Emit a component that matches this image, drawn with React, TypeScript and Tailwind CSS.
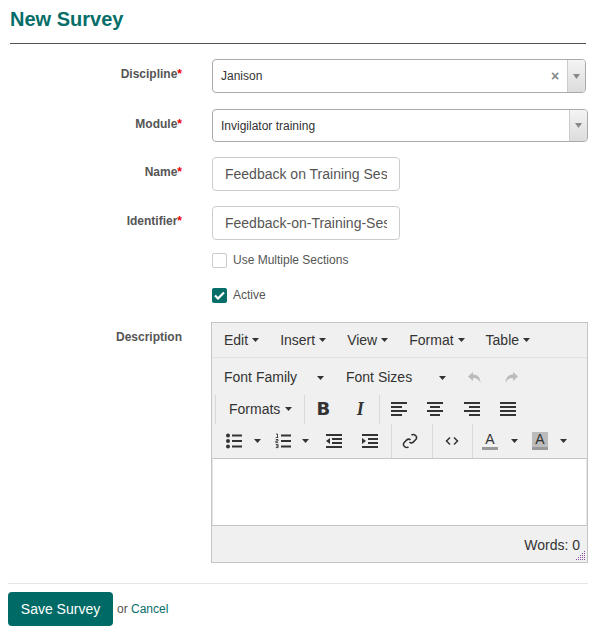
import React from "react";

const Caret = ({ className = "" }: { className?: string }) => (
    <svg width="7" height="4" viewBox="0 0 7 4" className={className}>
        <path d="M0 0h7L3.5 4z" fill="#333" />
    </svg>
);

const Label = ({ text, required }: { text: string; required?: boolean }) => (
    <div className="w-[174px] shrink-0 text-right pt-[8px] text-[12px] leading-[14px] font-bold text-[#555]">
        {text}
        {required && <span className="text-[#e00]">*</span>}
    </div>
);

const Sep = () => <div className="w-px self-stretch bg-[#d9d9d9]" />;

const Lines = ({ rows }: { rows: [number, number][] }) => (
    <svg width="16" height="16" viewBox="0 0 16 16">
        {rows.map(([x, w], i) => (
            <rect key={i} x={x} y={1 + i * 4} width={w} height="2" fill="#333" />
        ))}
    </svg>
);

const AlignLeft = () => <Lines rows={[[0, 16], [0, 11], [0, 16], [0, 11]]} />;
const AlignCenter = () => <Lines rows={[[0, 16], [3, 10], [0, 16], [3, 10]]} />;
const AlignRight = () => <Lines rows={[[0, 16], [5, 11], [0, 16], [5, 11]]} />;
const AlignJustify = () => <Lines rows={[[0, 16], [0, 16], [0, 16], [0, 16]]} />;

const BulletList = () => (
    <svg width="16" height="16" viewBox="0 0 16 16">
        <circle cx="2" cy="2.5" r="2" fill="#333" />
        <circle cx="2" cy="8" r="2" fill="#333" />
        <circle cx="2" cy="13.5" r="2" fill="#333" />
        <rect x="6" y="1.5" width="10" height="2" fill="#333" />
        <rect x="6" y="7" width="10" height="2" fill="#333" />
        <rect x="6" y="12.5" width="10" height="2" fill="#333" />
    </svg>
);

const NumList = () => (
    <svg width="16" height="16" viewBox="0 0 16 16">
        <path d="M1 1h1.5v3.5M0.8 4.5h2.4" stroke="#333" strokeWidth="0.9" fill="none" />
        <path d="M0.8 6.5h2.2v1.5h-2.2v1.6h2.4" stroke="#333" strokeWidth="0.9" fill="none" />
        <path d="M0.8 11.5h2.3v1.5h-2M3.1 13v1.6h-2.3" stroke="#333" strokeWidth="0.9" fill="none" />
        <rect x="6" y="1.5" width="10" height="2" fill="#333" />
        <rect x="6" y="7" width="10" height="2" fill="#333" />
        <rect x="6" y="12.5" width="10" height="2" fill="#333" />
    </svg>
);

const Outdent = () => (
    <svg width="16" height="16" viewBox="0 0 16 16">
        <rect x="0" y="1" width="16" height="2" fill="#333" />
        <rect x="6" y="5" width="10" height="2" fill="#333" />
        <rect x="6" y="9" width="10" height="2" fill="#333" />
        <rect x="0" y="13" width="16" height="2" fill="#333" />
        <path d="M4 5v6L0 8z" fill="#333" />
    </svg>
);

const Indent = () => (
    <svg width="16" height="16" viewBox="0 0 16 16">
        <rect x="0" y="1" width="16" height="2" fill="#333" />
        <rect x="6" y="5" width="10" height="2" fill="#333" />
        <rect x="6" y="9" width="10" height="2" fill="#333" />
        <rect x="0" y="13" width="16" height="2" fill="#333" />
        <path d="M0 5v6l4-3z" fill="#333" />
    </svg>
);

const LinkIcon = () => (
    <svg width="16" height="16" viewBox="0 0 16 16" fill="none" stroke="#333" strokeWidth="1.6">
        <path d="M9.5 2.2a2.6 2.6 0 0 1 3.7 0l0.6 0.6a2.6 2.6 0 0 1 0 3.7l-2.6 2.6a2.6 2.6 0 0 1-3.7 0" />
        <path d="M6.5 13.8a2.6 2.6 0 0 1-3.7 0l-0.6-0.6a2.6 2.6 0 0 1 0-3.7l2.6-2.6a2.6 2.6 0 0 1 3.7 0" />
    </svg>
);

const CodeIcon = () => (
    <svg width="16" height="16" viewBox="0 0 16 16" fill="none" stroke="#333" strokeWidth="1.5">
        <path d="M6 4.5L2.5 8 6 11.5M10 4.5L13.5 8 10 11.5" />
    </svg>
);

const Undo = () => (
    <svg width="16" height="16" viewBox="0 0 16 16">
        <path d="M6 2L1 6.5 6 11V8c4 0 6 1.5 7.5 5 0-5-2.5-8.5-7.5-8.5z" fill="#bbb" />
    </svg>
);

const Redo = () => (
    <svg width="16" height="16" viewBox="0 0 16 16">
        <path d="M10 2l5 4.5-5 4.5V8c-4 0-6 1.5-7.5 5 0-5 2.5-8.5 7.5-8.5z" fill="#bbb" />
    </svg>
);

const ColorA = ({ bg }: { bg?: boolean }) => (
    <span className="flex flex-col items-center w-[16px]">
        <span
            className={
                bg
                    ? "w-[16px] h-[15px] bg-[#bbb] text-[14px] leading-[15px] text-center text-[#333]"
                    : "w-[16px] h-[15px] text-[14px] leading-[15px] text-center text-[#333]"
            }
        >
            A
        </span>
        <span className="w-[16px] h-[3px] bg-[#999]" />
    </span>
);

const Resize = () => (
    <svg width="10" height="10" viewBox="0 0 10 10">
        {[
            [8, 0], [8, 2], [6, 2], [8, 4], [6, 4], [4, 4], [8, 6], [6, 6], [4, 6], [2, 6],
            [8, 8], [6, 8], [4, 8], [2, 8], [0, 8],
        ].map(([x, y], i) => (
            <rect key={i} x={x} y={y} width="1" height="1" fill="#8a4da8" />
        ))}
    </svg>
);

const Editor = () => (
    <div className="w-[377px] border border-[#c5c5c5] bg-[#f0f0f0] text-[#333] text-[14px]">
        <div className="h-[35px] flex items-center pl-[12px] gap-[21px] border-b border-[#e2e2e2]">
            {["Edit", "Insert", "View", "Format", "Table"].map((m) => (
                <span key={m} className="flex items-center">
                    {m}
                    <Caret className="ml-[4px]" />
                </span>
            ))}
        </div>
        <div className="h-[36px] pt-[3px] flex items-center pl-[12px]">
            <span className="w-[102px] flex items-center justify-between pr-[2px]">
                Font Family
                <Caret />
            </span>
            <span className="ml-[20px] w-[102px] flex items-center justify-between pr-[2px]">
                Font Sizes
                <Caret />
            </span>
            <span className="ml-[19px]"><Undo /></span>
            <span className="ml-[20px]"><Redo /></span>
        </div>
        <div className="h-[30px] flex items-center">
            <div className="ml-[3px] h-[29px] w-px bg-[#d9d9d9]" />
            <span className="flex items-center pl-[13px] pr-[12px]">
                Formats
                <Caret className="ml-[5px]" />
            </span>
            <div className="h-[29px] w-px bg-[#d9d9d9]" />
            <span className="w-[36px] text-center font-bold text-[18px] leading-none font-['DejaVu_Sans',sans-serif]">B</span>
            <span className="w-[38px] text-center font-bold italic text-[18px] leading-none font-['Liberation_Serif',serif]">I</span>
            <div className="h-[29px] w-px bg-[#d9d9d9]" />
            <span className="w-[37px] flex justify-center"><AlignLeft /></span>
            <span className="w-[36px] flex justify-center"><AlignCenter /></span>
            <span className="w-[37px] flex justify-center"><AlignRight /></span>
            <span className="w-[36px] flex justify-center"><AlignJustify /></span>
        </div>
        <div className="h-[34px] flex items-center">
            <span className="ml-[14px]"><BulletList /></span>
            <Caret className="ml-[12px]" />
            <span className="ml-[14px]"><NumList /></span>
            <Caret className="ml-[11px]" />
            <span className="ml-[17px]"><Outdent /></span>
            <span className="ml-[20px]"><Indent /></span>
            <span className="ml-[13px] self-stretch flex"><Sep /></span>
            <span className="ml-[10px]"><LinkIcon /></span>
            <span className="ml-[14px] self-stretch flex"><Sep /></span>
            <span className="ml-[11px]"><CodeIcon /></span>
            <span className="ml-[12px] self-stretch flex"><Sep /></span>
            <span className="ml-[9px]"><ColorA /></span>
            <Caret className="ml-[13px]" />
            <span className="ml-[14px]"><ColorA bg /></span>
            <Caret className="ml-[12px]" />
        </div>
        <div className="h-[67px] bg-white border-t border-[#c5c5c5] border-x border-x-[#e5e5e5]" />
        <div className="h-[37px] border-t border-[#c5c5c5] flex items-end justify-end relative">
            <span className="mb-[6px] mr-[7px]">Words: 0</span>
            <span className="absolute right-[1px] bottom-[1px]"><Resize /></span>
        </div>
    </div>
);

const Select = ({ value, clear, width }: { value: string; clear?: boolean; width: string }) => (
    <div className={`${width} flex border border-[#aaa] rounded-[4px] bg-white overflow-hidden`}>
        <div className="flex-1 flex items-center pl-[8px] text-[12px] text-[#333]">{value}</div>
        {clear && (
            <div className="w-[24px] flex items-center justify-center text-[#888] text-[14px] font-bold">×</div>
        )}
        <div className="w-[18px] border-l border-[#ccc] bg-gradient-to-b from-[#f4f4f4] to-[#dcdcdc] flex items-center justify-center">
            <svg width="7" height="5" viewBox="0 0 7 5">
                <path d="M0 0h7L3.5 5z" fill="#888" />
            </svg>
        </div>
    </div>
);

const TextInput = ({ value }: { value: string }) => (
    <input
        readOnly
        value={value}
        className="w-[188px] h-[34px] border border-[#ccc] rounded-[4px] px-[12px] text-[14px] text-[#555] bg-white outline-none"
    />
);

export default function App() {
    return (
        <div className="w-[600px] h-[636px] bg-white px-[8px] font-['Liberation_Sans',Arial,sans-serif]">
            <h1 className="pt-[7px] pl-[2px] text-[20px] leading-[24px] font-bold text-[#066e69]">New Survey</h1>
            <div className="mt-[12px] ml-[2px] w-[576px] border-t border-[#555]" />

            <div className="flex mt-[15px]">
                <Label text="Discipline" required />
                <div className="ml-[30px] flex h-[34px]">
                    <Select value="Janison" clear width="w-[374px]" />
                </div>
            </div>
            <div className="flex mt-[16px]">
                <Label text="Module" required />
                <div className="ml-[30px] flex h-[33px]">
                    <Select value="Invigilator training" width="w-[376px]" />
                </div>
            </div>
            <div className="flex mt-[15px]">
                <Label text="Name" required />
                <div className="ml-[30px]">
                    <TextInput value="Feedback on Training Session" />
                </div>
            </div>
            <div className="flex mt-[15px]">
                <Label text="Identifier" required />
                <div className="ml-[30px]">
                    <TextInput value="Feedback-on-Training-Session" />
                </div>
            </div>
            <div className="flex mt-[11px]">
                <div className="w-[174px] shrink-0" />
                <div className="ml-[30px] flex items-center text-[12px] text-[#555]">
                    <span className="w-[15px] h-[15px] border border-[#ccc] rounded-[2px] bg-white" />
                    <span className="ml-[6px]">Use Multiple Sections</span>
                </div>
            </div>
            <div className="flex mt-[17px]">
                <div className="w-[174px] shrink-0" />
                <div className="ml-[30px] flex items-center text-[12px] text-[#555]">
                    <span className="w-[15px] h-[15px] rounded-[2px] bg-[#066e69] flex items-center justify-center">
                        <svg width="11" height="9" viewBox="0 0 11 9">
                            <path d="M1 4.5l3 3L10 1.5" stroke="#fff" strokeWidth="2.2" fill="none" />
                        </svg>
                    </span>
                    <span className="ml-[6px]">Active</span>
                </div>
            </div>
            <div className="flex mt-[18px]">
                <Label text="Description" />
                <div className="ml-[29px]">
                    <Editor />
                </div>
            </div>

            <div className="mt-[20px] w-[580px] border-t border-[#e5e5e5]" />
            <div className="mt-[8px] flex items-center">
                <button className="w-[105px] h-[34px] rounded-[4px] bg-[#006b66] text-white text-[14px]">
                    Save Survey
                </button>
                <span className="ml-[4px] text-[12px] text-[#555]">
                    or <span className="text-[#066e69]">Cancel</span>
                </span>
            </div>
        </div>
    );
}
